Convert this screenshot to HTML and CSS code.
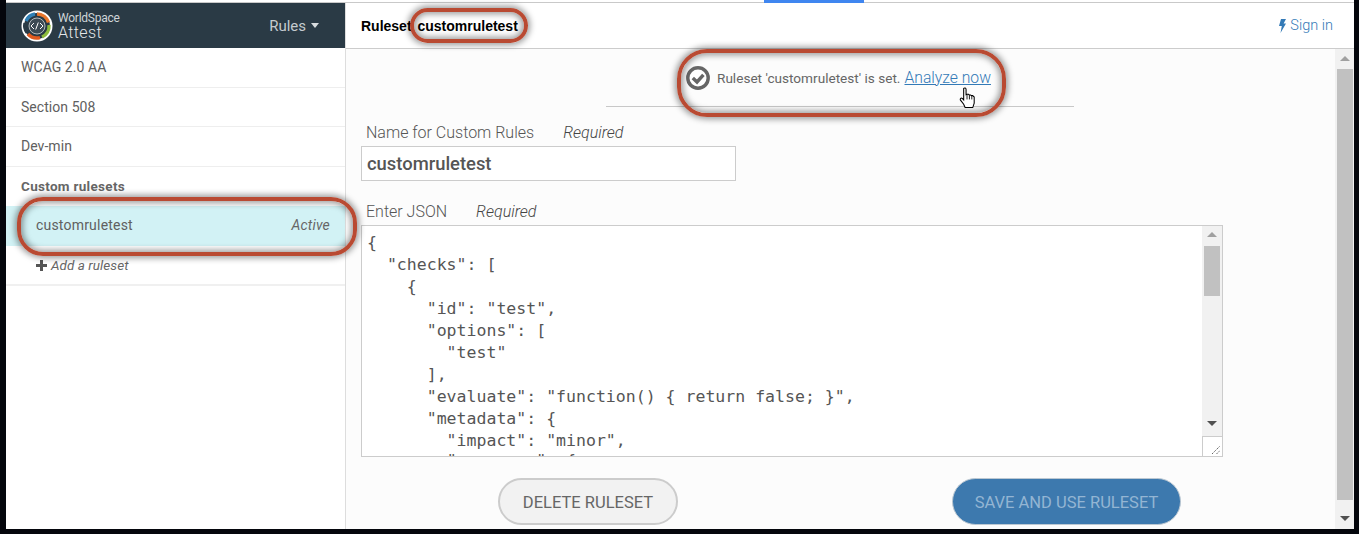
FILE: index.html
```html
<!DOCTYPE html>
<html lang="en">
<head>
<meta charset="utf-8">
<title>WorldSpace Attest Rules</title>
<link rel="stylesheet" href="styles.css">
</head>
<body>
<div class="frame">
  <div class="topline"><span class="topline-tab"></span></div>
  <div class="app">
    <aside class="sidebar">
      <header class="brand">
        <svg class="logo" width="32" height="32" viewBox="0 0 32 32" aria-hidden="true">
          <circle cx="16" cy="16" r="15.5" fill="#fff"/>
          <circle cx="16" cy="16" r="13" fill="#2a3a45"/>
          <g fill="none" stroke-width="3.4">
            <path d="M5 11A12 12 0 0 1 14 4" stroke="#2f7fb5"/>
            <path d="M16 4A12 12 0 0 1 27.5 12.5" stroke="#e8762c"/>
            <path d="M28 15A12 12 0 0 1 21 27" stroke="#8dbb3c"/>
            <path d="M19 27.6A12 12 0 0 1 7 24" stroke="#e05a1e"/>
            <path d="M6 22.5A12 12 0 0 1 4 13" stroke="#2a3a45"/>
          </g>
          <circle cx="16" cy="16" r="8" fill="#3c4a54" stroke="#cfd5d8" stroke-width=".8"/>
          <path d="M13 13l-3 3 3 3M19 13l3 3-3 3M17.3 12.5l-2.6 7" fill="none" stroke="#fff" stroke-width="1"/>
        </svg>
        <div class="brand-name">
          <span class="brand-top">WorldSpace</span>
          <span class="brand-bottom">Attest</span>
        </div>
        <div class="rules-menu">Rules <span class="caret"></span></div>
      </header>
      <nav class="rules">
        <div class="rule-row">WCAG 2.0 AA</div>
        <div class="rule-row">Section 508</div>
        <div class="rule-row">Dev-min</div>
        <div class="custom-title">Custom rulesets</div>
        <div class="rule-active"><span>customruletest</span><em>Active</em></div>
        <div class="rule-add"><svg class="plus" width="11" height="11" viewBox="0 0 11 11" aria-hidden="true"><path d="M4 0h3v4h4v3H7v4H4V7H0V4h4z" fill="#555"/></svg><em>Add a ruleset</em></div>
      </nav>
    </aside>
    <main class="main">
      <header class="main-head">
        <div class="ruleset-title">Ruleset customruletest</div>
        <a class="signin"><svg width="7" height="14" viewBox="0 0 7 14" aria-hidden="true"><path d="M2 0h5L4.600 4.500H7L1.500 14l1.300-7H0z" fill="#337ab7"/></svg> Sign in</a>
      </header>
      <div class="content-wrap">
        <div class="content">
          <div class="notice">
            <svg class="check" width="24" height="24" viewBox="0 0 24 24" aria-hidden="true">
              <circle cx="12" cy="12" r="10.200" fill="#fff" stroke="#666" stroke-width="3.400"/>
              <path d="M6.800 12l4.200 4 6.400-7.200" fill="none" stroke="#666" stroke-width="3.400"/>
            </svg>
            <span>Ruleset 'customruletest' is set.</span>
            <a class="analyze">Analyze now</a>
          </div>
          <div class="divider"></div>
          <div class="field-label name-label"><span>Name for Custom Rules</span><em>Required</em></div>
          <div class="name-input">customruletest</div>
          <div class="field-label json-label"><span>Enter JSON</span><em>Required</em></div>
          <div class="json-box">
<pre class="json">{
  "checks": [
    {
      "id": "test",
      "options": [
        "test"
      ],
      "evaluate": "function() { return false; }",
      "metadata": {
        "impact": "minor",
        <span class="json-last">"messages": {</span></pre>
            <div class="json-scroll">
              <span class="arrow-up"></span>
              <span class="json-thumb"></span>
              <span class="arrow-down json-arrow-down"></span>
              <span class="grip"><svg width="10" height="10" viewBox="0 0 10 10" aria-hidden="true"><path d="M1 9l8-8M5.500 9L9 5.500" stroke="#666" stroke-width="1" stroke-dasharray="1.500 .8"/></svg></span>
            </div>
          </div>
          <div class="actions">
            <button class="btn btn-delete" type="button">DELETE RULESET</button>
            <button class="btn btn-save" type="button">SAVE AND USE RULESET</button>
          </div>
        </div>
        <div class="page-scroll">
          <span class="arrow-up page-up"></span>
          <span class="page-thumb"></span>
          <span class="arrow-down page-down"></span>
        </div>
      </div>
    </main>
  </div>
  <span class="ring ring-title"></span>
  <span class="ring ring-notice"></span>
  <span class="ring ring-side"></span>
  <svg class="cursor" width="17" height="22" viewBox="0 0 17 23" aria-hidden="true">
    <path d="M4.500 1.500c1-1 2.500-.5 2.500 1V8l1-.5h1.500l.8.800h1.400l.8.700h1.400l1.600 1.500V17l-1.500 4.500H6L4.500 18 1 13.500c-.5-1.500.8-2.500 2-1.500l1.500 1.500z" fill="#fff" stroke="#000" stroke-width="1.100"/>
    <path d="M8 8v5M10.500 8.500V13M13 9.500V13" stroke="#000" stroke-width=".9" fill="none"/>
  </svg>
</div>
</body>
</html>
```
FILE: styles.css
```css
* { box-sizing: border-box; }
html, body { margin: 0; height: 534px; overflow: hidden; background: #04060c; }
body { font-family: Roboto, "Liberation Sans", sans-serif; color: #555; }
.frame { position: relative; width: 1348px; height: 529px; margin-left: 6px; background: #fff; display: flex; flex-direction: column; }
.topline { height: 3px; flex: none; background: #fff; border-bottom: 1px solid #c9c9c9; position: relative; }
.topline-tab { position: absolute; left: 758px; top: 0; width: 100px; height: 3px; background: #3f86f0; }
.app { flex: 1; display: flex; min-height: 0; }

.sidebar { width: 340px; flex: none; border-right: 1px solid #ddd; background: #fff; }
.brand { height: 45px; background: #2a3a45; display: flex; align-items: center; padding: 0 26px 0 15px; color: #d8dcdf; }
.logo { flex: none; margin-right: 5px; }
.brand-name { display: flex; flex-direction: column; line-height: 13px; }
.brand-top { font-size: 12px; letter-spacing: -.25px; color: #cfd5d8; }
.brand-bottom { font-size: 16px; font-weight: 300; color: #e4e7e9; letter-spacing: .4px; margin-top: 1px; }
.rules-menu { margin-left: auto; font-size: 15px; color: #c5cbcf; display: flex; align-items: center; gap: 5px; }
.caret { width: 0; height: 0; border: 4.500px solid transparent; border-top: 5px solid #d8dcdf; border-bottom: 0; }
.rules { font-size: 14px; letter-spacing: .05px; color: #606060; }
.rule-row { height: 39.500px; line-height: 38px; padding-left: 15px; border-bottom: 1px solid #eee; }
.custom-title { height: 39.500px; line-height: 39px; padding-left: 15px; font-weight: 700; color: #666; font-size: 13.500px; letter-spacing: .3px; }
.rule-active { height: 39.500px; background: #d2f2f5; display: flex; align-items: center; justify-content: space-between; padding: 0 15px 2px 30px; font-size: 14px; letter-spacing: .2px; }
.rule-active em { color: #666; }
.rule-add { height: 40px; padding: 1px 0 0 30px; border-bottom: 2px solid #f0f0f0; display: flex; align-items: center; font-size: 13.500px; color: #666; gap: 4px; }
.plus { flex: none; }

.main { flex: 1; min-width: 0; display: flex; flex-direction: column; background: #fcfcfc; }
.main-head { height: 46px; flex: none; background: #fff; border-bottom: 1px solid #ccc; display: flex; align-items: center; justify-content: space-between; padding: 0 21px 0 15px; }
.ruleset-title { font: 700 14px "Liberation Sans", Arial, sans-serif; color: #000; word-spacing: 2px; }
.signin { font-size: 14.500px; color: #337ab7; font-weight: 300; display: flex; align-items: center; gap: 4px; }
.content-wrap { flex: 1; display: flex; min-height: 0; }
.content { flex: 1; min-width: 0; padding: 0 0 0 15px; }

.notice { height: 57px; margin-left: 325px; display: flex; align-items: center; font-size: 13.600px; color: #666; }
.check { margin-right: 7px; flex: none; }
.analyze { color: #337ab7; font-size: 15.700px; font-weight: 300; text-decoration: underline; margin-left: 4px; }
.divider { width: 468px; height: 1px; background: #c8c8c8; margin-left: 245px; }
.field-label { display: flex; font-size: 16px; font-weight: 300; color: #555; padding-left: 5px; gap: 29px; }
.field-label em { color: #444; }
.name-label { margin-top: 16px; height: 23px; line-height: 20px; }
.json-label { margin-top: 20px; height: 24px; line-height: 21px; }
.name-input { width: 375px; height: 35px; border: 1px solid #ccc; background: #fff; padding-left: 5px; font: 500 18.400px/33px Roboto, sans-serif; color: #555; }
.json-box { width: 862px; height: 232px; border: 1px solid #ccc; background: #fff; position: relative; overflow: hidden; }
.json { margin: 0; padding: 5.500px 0 0 5px; font: 16.550px/22px "DejaVu Sans Mono", monospace; color: #555; }
.json-last { line-height: 0; vertical-align: 2px; }
.json-scroll { position: absolute; right: 0; top: 0; bottom: 0; width: 20px; background: #f1f1f1; display: flex; flex-direction: column; align-items: center; }
.arrow-up { width: 0; height: 0; border: 5px solid transparent; border-bottom: 5px solid #a0a0a0; border-top: 0; margin-top: 6px; flex: none; }
.arrow-down { width: 0; height: 0; border: 5px solid transparent; border-top: 5px solid #505050; border-bottom: 0; flex: none; }
.json-thumb { width: 16px; height: 50px; background: #c1c1c1; margin-top: 9px; flex: none; }
.json-arrow-down { margin-top: 125px; }
.grip { width: 20px; height: 20px; margin-top: auto; background: #fff; border-top: 1px solid #ccc; border-left: 1px solid #ccc; display: flex; align-items: flex-end; justify-content: flex-end; padding: 0 1px 1px 0; flex: none; }

.actions { display: flex; justify-content: space-between; width: 683px; margin: 21px 0 0 137px; }
.btn { height: 47px; border-radius: 24px; font: 400 16.500px/1 Roboto, sans-serif; padding: 3px 0 0; }
.btn-delete { width: 180px; background: #f2f2f2; border: 2px solid #ccc; color: #666; }
.btn-save { width: 229px; background: #3d79ae; border: 1px solid #bcc8d2; color: #93b5d3; }

.page-scroll { width: 19px; flex: none; background: #f1f1f1; display: flex; flex-direction: column; align-items: center; }
.page-up { margin-top: 7px; }
.page-thumb { width: 16px; height: 431px; background: #c1c1c1; margin-top: 8px; flex: none; }
.page-down { margin-top: 16px; }

.ring { position: absolute; display: block; border: 4px solid #b94a32; box-shadow: 0 0 6px 2px rgba(0,0,0,.4), inset 0 0 6px 2px rgba(0,0,0,.4); }
.ring-title { left: 404px; top: 8px; width: 118px; height: 35px; border-radius: 18px; }
.ring-notice { left: 671px; top: 49px; width: 329px; height: 68px; border-radius: 30px; }
.ring-side { left: 11px; top: 197px; width: 340px; height: 59px; border-radius: 26px; }
.cursor { position: absolute; left: 953px; top: 87px; }
```
